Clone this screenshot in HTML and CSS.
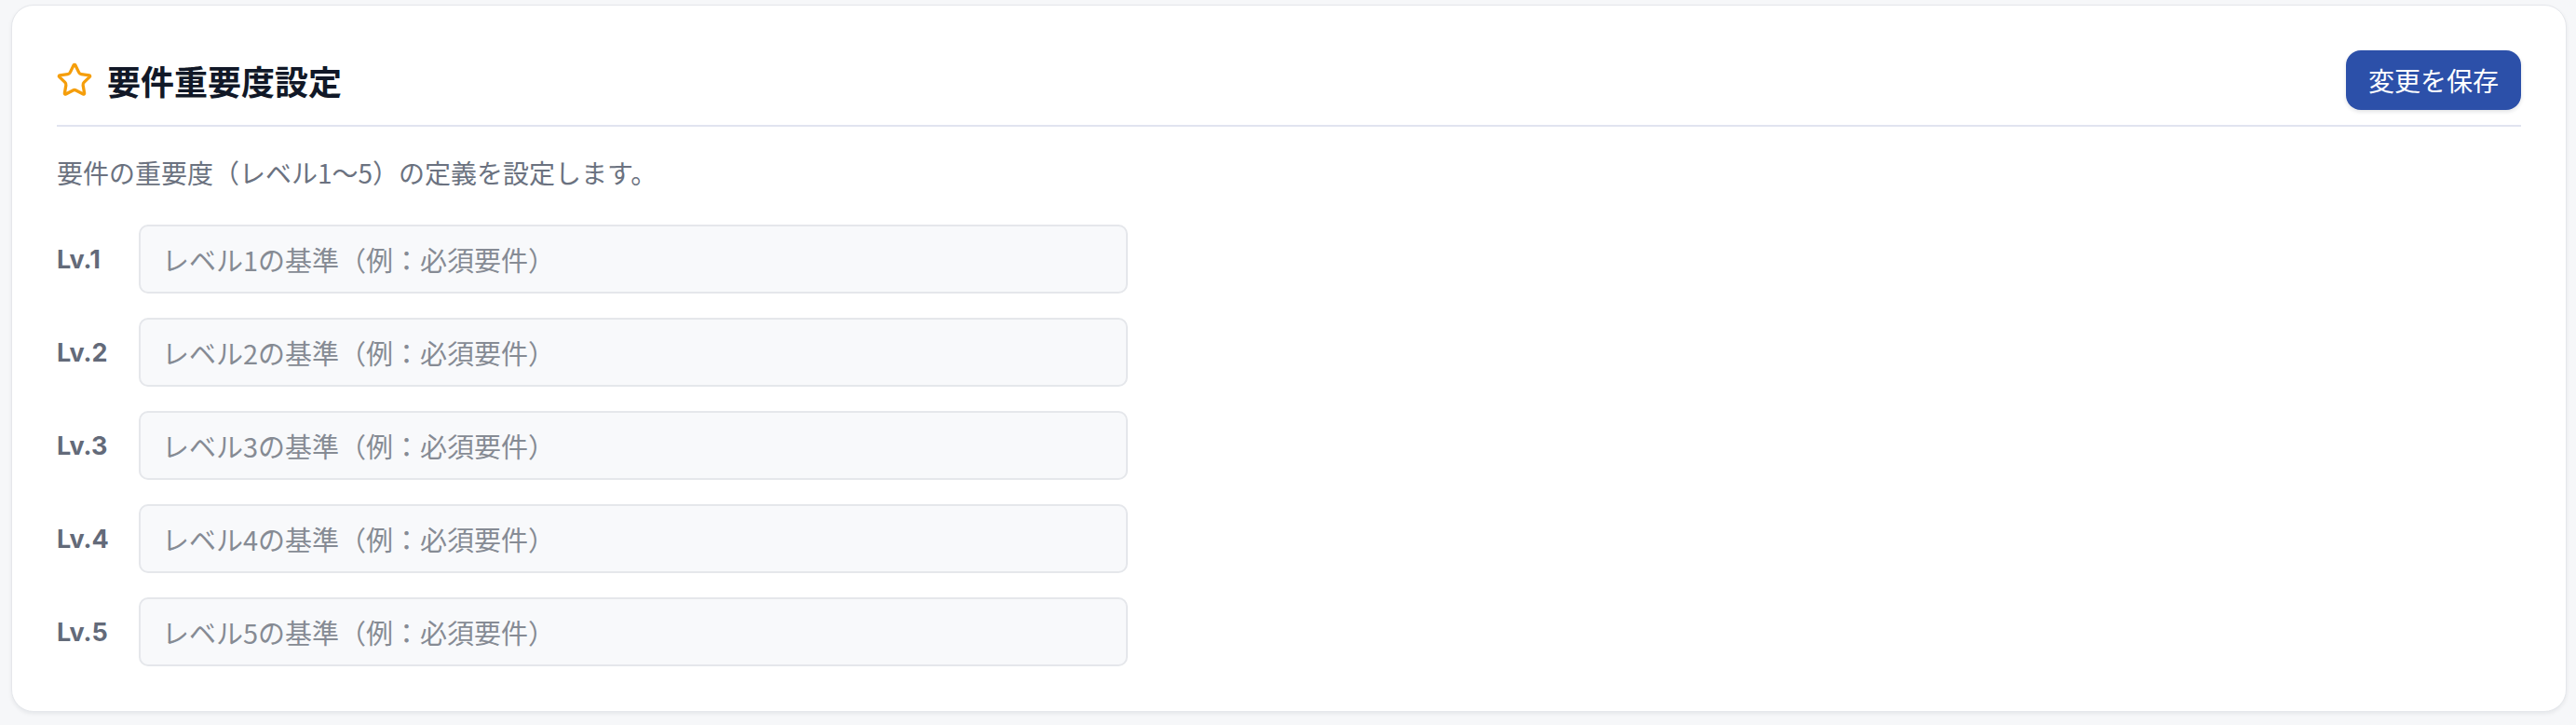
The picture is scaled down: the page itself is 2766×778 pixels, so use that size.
FILE: index.html
```html
<!DOCTYPE html>
<html lang="ja">
<head>
<meta charset="utf-8">
<title>要件重要度設定</title>
<link rel="stylesheet" href="styles.css">
</head>
<body>
<section class="card">
  <header class="card-header">
    <div class="title-wrap">
      <svg class="star" viewBox="0 0 24 24" width="40" height="40" fill="none" stroke="currentColor" stroke-width="2" stroke-linecap="round" stroke-linejoin="round" aria-hidden="true">
        <path d="M11.525 2.295a.53.53 0 0 1 .95 0l2.31 4.679a2.123 2.123 0 0 0 1.595 1.16l5.166.756a.53.53 0 0 1 .294.904l-3.736 3.638a2.123 2.123 0 0 0-.611 1.878l.882 5.14a.53.53 0 0 1-.771.56l-4.618-2.428a2.122 2.122 0 0 0-1.973 0L6.396 21.01a.53.53 0 0 1-.77-.56l.881-5.139a2.122 2.122 0 0 0-.611-1.879L2.16 9.795a.53.53 0 0 1 .294-.906l5.165-.755a2.122 2.122 0 0 0 1.597-1.16z"/>
      </svg>
      <h2 class="title">要件重要度設定</h2>
    </div>
    <button class="save-btn" type="button">変更を保存</button>
  </header>
  <p class="desc">要件の重要度（レベル1〜5）の定義を設定します。</p>
  <div class="levels">
    <div class="level-row">
      <label class="level-label" for="lv1">Lv.1</label>
      <input class="level-input" id="lv1" type="text" placeholder="レベル1の基準（例：必須要件）">
    </div>
    <div class="level-row">
      <label class="level-label" for="lv2">Lv.2</label>
      <input class="level-input" id="lv2" type="text" placeholder="レベル2の基準（例：必須要件）">
    </div>
    <div class="level-row">
      <label class="level-label" for="lv3">Lv.3</label>
      <input class="level-input" id="lv3" type="text" placeholder="レベル3の基準（例：必須要件）">
    </div>
    <div class="level-row">
      <label class="level-label" for="lv4">Lv.4</label>
      <input class="level-input" id="lv4" type="text" placeholder="レベル4の基準（例：必須要件）">
    </div>
    <div class="level-row">
      <label class="level-label" for="lv5">Lv.5</label>
      <input class="level-input" id="lv5" type="text" placeholder="レベル5の基準（例：必須要件）">
    </div>
  </div>
</section>
</body>
</html>
```

FILE: styles.css
```css
* {
  box-sizing: border-box;
}

html, body {
  margin: 0;
  background: #f6f7f9;
}

body {
  padding: 5px 10px 14px 12px;
  font-family: "Inter", "Noto Sans CJK JP", sans-serif;
  color: #111827;
}

.card {
  background: #ffffff;
  border: 1px solid #e5e7eb;
  border-radius: 24px;
  box-shadow: 0 2px 4px rgba(15, 23, 42, 0.07);
  padding: 48px;
}

.card-header {
  display: flex;
  align-items: center;
  justify-content: space-between;
  padding-bottom: 16px;
  border-bottom: 2px solid #e1e4f0;
}

.title-wrap {
  display: flex;
  align-items: center;
  gap: 15px;
}

.star {
  display: block;
  color: #f59e0b;
  margin-left: -1px;
}

.title {
  margin: 0;
  font-family: "Noto Sans CJK JP", sans-serif;
  font-size: 36px;
  font-weight: 700;
  line-height: 1.3;
  color: #111827;
}

.save-btn {
  height: 64px;
  padding: 0 24px;
  border: none;
  border-radius: 16px;
  background: #2c50a9;
  color: #ffffff;
  font-family: "Noto Sans CJK JP", sans-serif;
  font-size: 28px;
  font-weight: 400;
  box-shadow: 0 2px 4px rgba(15, 23, 42, 0.12);
}

.desc {
  margin: 29px 0 36px;
  font-family: "Noto Sans CJK JP", sans-serif;
  font-size: 28px;
  line-height: 40px;
  color: #6b7280;
}

.levels {
  display: flex;
  flex-direction: column;
  gap: 26px;
}

.level-row {
  display: flex;
  align-items: center;
  gap: 24px;
}

.level-label {
  width: 64px;
  flex: none;
  font-size: 27px;
  font-weight: 700;
  color: #636a79;
}

.level-input {
  width: 1062px;
  height: 74px;
  padding: 0 23px;
  border: 2px solid #e5e7eb;
  border-radius: 10px;
  background: #f8f9fb;
  font-family: "Noto Sans CJK JP", sans-serif;
  font-size: 29px;
  color: #111827;
  outline: none;
}

.level-input::placeholder {
  color: #868b94;
}
```
